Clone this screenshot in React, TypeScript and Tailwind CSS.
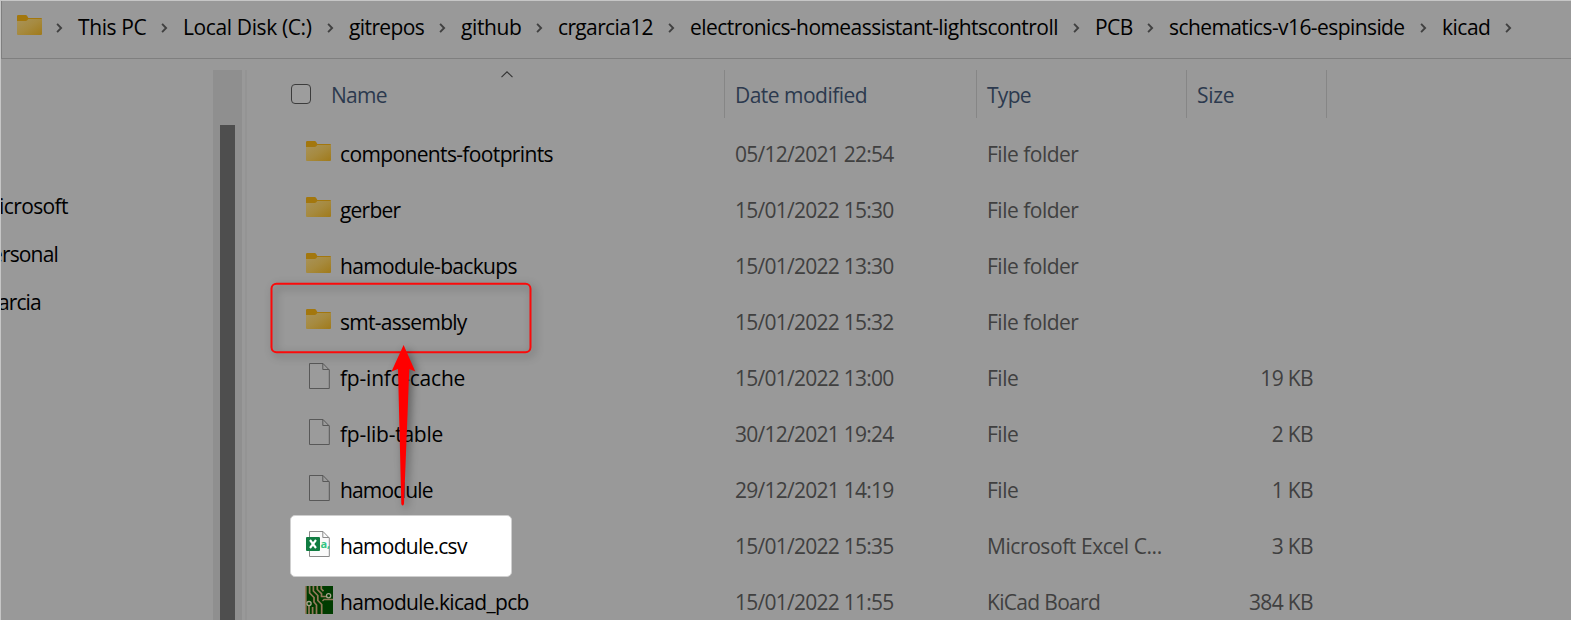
const crumbs = [
  { label: 'This PC', box: 'w-[105px]', track: 'tracking-[-0.38px]' },
  { label: 'Local Disk (C:)', box: 'w-[166px]', track: 'tracking-[-0.38px]' },
  { label: 'gitrepos', box: 'w-[112px]', track: 'tracking-[-0.6px]' },
  { label: 'github', box: 'w-[97px]', track: 'tracking-[-0.4px]' },
  { label: 'crgarcia12', box: 'w-[132px]', track: 'tracking-[-0.64px]' },
  { label: 'electronics-homeassistant-lightscontroll', box: 'w-[405px]', track: 'tracking-[-0.55px]' },
  { label: 'PCB', box: 'w-[74px]', track: 'tracking-[-0.6px]' },
  { label: 'schematics-v16-espinside', box: 'w-[273px]', track: 'tracking-[-0.58px]' },
  { label: 'kicad', box: 'w-[85px]', track: 'tracking-[-0.5px]' },
];

const rows = [
  { icon: 'folder', name: 'components-footprints', track: 'tracking-[-0.64px]', date: '05/12/2021 22:54', type: 'File folder', size: '' },
  { icon: 'folder', name: 'gerber', track: 'tracking-[-0.8px]', date: '15/01/2022 15:30', type: 'File folder', size: '' },
  { icon: 'folder', name: 'hamodule-backups', track: 'tracking-[-0.67px]', date: '15/01/2022 13:30', type: 'File folder', size: '' },
  { icon: 'folder', name: 'smt-assembly', track: 'tracking-[-0.72px]', date: '15/01/2022 15:32', type: 'File folder', size: '' },
  { icon: 'file', name: 'fp-info-cache', track: 'tracking-[-0.2px]', date: '15/01/2022 13:00', type: 'File', size: '19 KB' },
  { icon: 'file', name: 'fp-lib-table', track: 'tracking-[-0.24px]', date: '30/12/2021 19:24', type: 'File', size: '2 KB' },
  { icon: 'file', name: 'hamodule', track: 'tracking-[-0.85px]', date: '29/12/2021 14:19', type: 'File', size: '1 KB' },
  { icon: 'csv', name: 'hamodule.csv', track: 'tracking-[-0.74px]', date: '15/01/2022 15:35', type: 'Microsoft Excel C...', size: '3 KB' },
  { icon: 'pcb', name: 'hamodule.kicad_pcb', track: 'tracking-[-0.67px]', date: '15/01/2022 11:55', type: 'KiCad Board', size: '384 KB' },
];

const typeTrack: Record<string, string> = {
  'File folder': 'tracking-[-0.5px]',
  File: 'tracking-[-0.5px]',
  'Microsoft Excel C...': 'tracking-[-0.42px]',
  'KiCad Board': 'tracking-[-0.68px]',
};

function Folder() {
  return (
    <svg width="25" height="20" viewBox="0 0 25 20" className="block">
      <defs>
        <linearGradient id="folder" x1="0" y1="0" x2="1" y2="1">
          <stop offset="0" stopColor="#a8935a" />
          <stop offset="0.5" stopColor="#a68a3f" />
          <stop offset="1" stopColor="#a07a1a" />
        </linearGradient>
      </defs>
      <path d="M0 1.2Q0 0 1.2 0H8.6Q9.6 0 10.2 1L11.3 3H24Q25 3 25 4V10H0Z" fill="#a3770d" />
      <path d="M0 6H8.6Q9.6 6 10.3 5.2L11.2 4H25V19Q25 20 24 20H1Q0 20 0 19Z" fill="url(#folder)" />
    </svg>
  );
}

function Page({ fill, stroke }: { fill: string; stroke: string }) {
  return (
    <>
      <path d="M.5 .5H14L20.3 7V25.5H.5Z" fill={fill} stroke={stroke} />
      <path d="M13.8 .5V6.5H20.2" fill="none" stroke={stroke} />
    </>
  );
}

function FileIcon() {
  return (
    <svg width="21" height="26" viewBox="0 0 21 26" className="block">
      <Page fill="#9b9b9b" stroke="#585858" />
    </svg>
  );
}

function CsvIcon() {
  return (
    <svg width="24" height="26" viewBox="0 0 24 26" className="block">
      <g transform="translate(3 0)">
        <Page fill="#fafafa" stroke="#8a8a8a" />
      </g>
      <rect x="0" y="6" width="14" height="14" rx="1" fill="#107c41" />
      <path d="M4 9L10 17M10 9L4 17" stroke="#fff" strokeWidth="2.1" />
      <text x="14.4" y="17" fontSize="11" fontWeight="700" fontFamily="Open Sans, sans-serif" fill="#33c481">a,</text>
    </svg>
  );
}

function PcbIcon() {
  return (
    <svg width="28" height="28" viewBox="0 0 28 28" className="block">
      <rect width="28" height="28" fill="#003c00" />
      <g fill="none" stroke="#94795a" strokeWidth="1.7">
        <path d="M.8 0V28" />
        <path d="M4.6 0V7L9 11.5V16L11.5 19V28" />
        <path d="M8.4 0V5L12.8 9.5V14.5L16.7 18.5V28" />
        <path d="M12.3 0V3.5L16.5 7.7V10.5H22" />
        <path d="M16.3 0V3L18.5 5.2" />
        <path d="M4 19V28M7.6 21V28" />
      </g>
      <circle cx="23.6" cy="9.7" r="2.1" fill="#003c00" stroke="#a9a58e" strokeWidth="1.3" />
      <circle cx="4" cy="17.6" r="2.1" fill="#003c00" stroke="#a9a58e" strokeWidth="1.3" />
      <path d="M17.5 15L19 13.5H28" fill="none" stroke="#94795a" strokeWidth="1.3" />
    </svg>
  );
}

function Chevron() {
  return (
    <svg width="7" height="10" viewBox="0 0 7 10" className="block shrink-0">
      <path d="M1.1 .9L5.1 5L1.1 9.1" fill="none" stroke="#404040" strokeWidth="1.9" />
    </svg>
  );
}

function RowIcon({ kind }: { kind: string }) {
  if (kind === 'folder') return <div className="ml-[59px] -mt-[6px] w-[34px]"><Folder /></div>;
  if (kind === 'file') return <div className="ml-[62px] -mt-[4px] w-[31px]"><FileIcon /></div>;
  if (kind === 'csv') return <div className="ml-[59px] -mt-[4px] w-[34px]"><CsvIcon /></div>;
  return <div className="ml-[58px] -mt-[4px] w-[35px]"><PcbIcon /></div>;
}

export default function App() {
  return (
    <div className="relative flex h-[620px] w-[1571px] flex-col overflow-hidden border-l border-t border-[#c6c6c6] bg-[#999999] font-['Open_Sans',sans-serif] text-[21px] leading-[28px] whitespace-nowrap text-black">
      <nav className="flex h-[58px] shrink-0 border-b border-l border-[#7f7f7f] pl-[15px] pt-[12px]">
        <div className="mt-[2px] w-[39px]"><Folder /></div>
        <div className="mt-[10px] w-[22px]"><Chevron /></div>
        {crumbs.map((c) => (
          <div key={c.label} className={`flex shrink-0 justify-between pr-[15px] ${c.box}`}>
            <span className={c.track}>{c.label}</span>
            <div className="mt-[10px]"><Chevron /></div>
          </div>
        ))}
      </nav>
      <div className="flex min-h-0 flex-1">
        <aside className="flex w-[212px] shrink-0 flex-col overflow-hidden pt-[123px]">
          <div className="flex h-12 items-center tracking-[-0.6px]">
            <span className="-ml-[2px]">icrosoft</span>
          </div>
          <div className="flex h-12 items-center tracking-[-0.85px]">
            <span className="-ml-[10px]">ersonal</span>
          </div>
          <div className="flex h-12 items-center tracking-[-0.9px]">
            <span className="-ml-[3px]">arcia</span>
          </div>
        </aside>
        <div className="mt-[11px] flex w-[29px] shrink-0 justify-center bg-[#8f8f8f] pr-[1px] pt-[55px]">
          <div className="w-[15px] bg-[#4e4e4e]" />
        </div>
        <div className="ml-[3px] mt-[11px] w-[2px] shrink-0 bg-[#949494]" />
        <main className="flex flex-1 flex-col">
          <div className="mt-[11px] flex h-[48px] shrink-0 text-[#2c394e]">
            <div className="relative flex w-[478px] border-r border-[#868686] pl-[44px] pt-[11px]">
              <div className="mt-[3px] h-5 w-5 rounded-[4px] border border-[#3c3c3c] bg-[#9d9d9d]" />
              <span className="ml-[20px] tracking-[-0.7px]">Name</span>
              <svg width="12" height="7" viewBox="0 0 12 7" className="absolute left-[254px] top-px">
                <path d="M.5 6.2L6 .8L11.5 6.2" fill="none" stroke="#333" strokeWidth="1.1" />
              </svg>
            </div>
            <div className="w-[252px] border-r border-[#868686] pl-[10px] pt-[11px] tracking-[-0.52px]">Date modified</div>
            <div className="w-[210px] border-r border-[#868686] pl-[10px] pt-[11px] tracking-[-0.7px]">Type</div>
            <div className="w-[140px] border-r border-[#868686] pl-[10px] pt-[11px] tracking-[-0.3px]">Size</div>
          </div>
          <div className="mt-[8px] flex flex-col">
            {rows.map((r) => (
              <div key={r.name} className="flex h-14 shrink-0 items-center text-[#404040]">
                <div className="relative flex h-14 w-[488px] shrink-0 items-center text-black">
                  {r.icon === 'csv' && (
                    <div className="absolute left-[43px] top-[-3px] h-[62px] w-[222px] rounded-[5px] border border-[#cfcfcf] bg-white" />
                  )}
                  <div className="relative flex items-center">
                    <RowIcon kind={r.icon} />
                    <span className={r.track}>{r.name}</span>
                  </div>
                </div>
                <div className="w-[252px] shrink-0 tracking-[-0.75px]">{r.date}</div>
                <div className={`w-[210px] shrink-0 ${typeTrack[r.type]}`}>{r.type}</div>
                <div className="w-[116px] shrink-0 text-right tracking-[-0.65px]">{r.size}</div>
              </div>
            ))}
          </div>
        </main>
      </div>
      <svg width="300" height="250" viewBox="260 270 300 250" className="absolute left-[259px] top-[269px] [filter:drop-shadow(3px_3px_4px_rgba(0,0,0,0.4))]">
        <rect x="271.5" y="283.7" width="259" height="68.6" rx="5" fill="none" stroke="#fb0a0a" strokeWidth="2" />
      </svg>
      <svg width="300" height="250" viewBox="260 270 300 250" className="absolute left-[259px] top-[269px] [filter:drop-shadow(3px_3px_4px_rgba(0,0,0,0.4))]">
        <path d="M403.6 345L415.3 371.5L409.3 369L404 504Q402.6 507 401.3 504L398 369L391.5 371.5Z" fill="#f00" />
      </svg>
    </div>
  );
}
